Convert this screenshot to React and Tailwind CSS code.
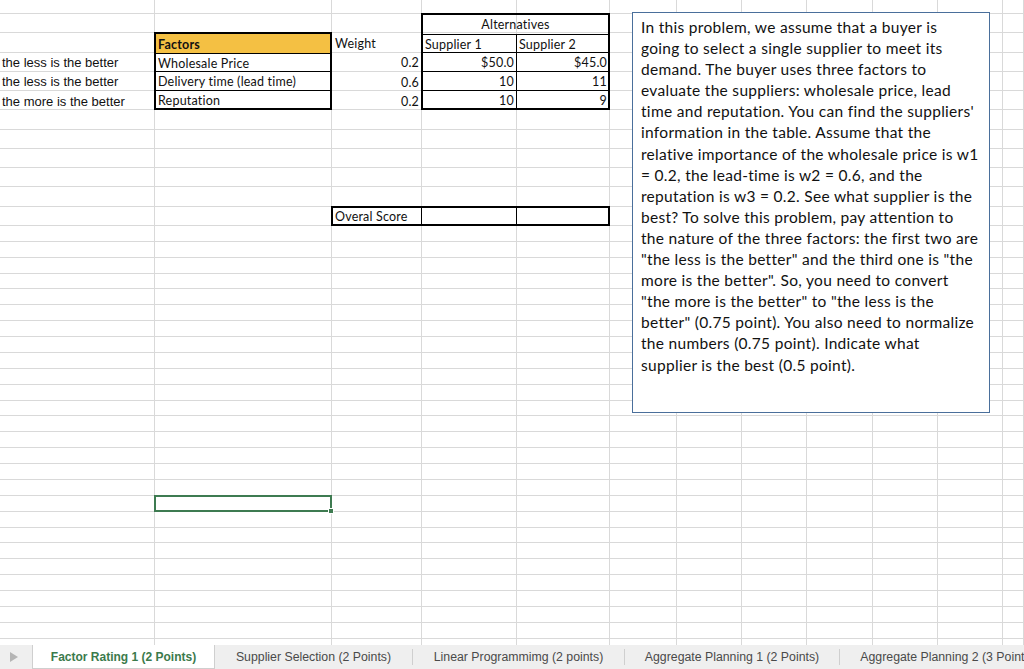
import React from 'react'

const ROWS = 40
const COLS = 12

const lines = [
    'In this problem, we assume that a buyer is',
    'going to select a single supplier to meet its',
    'demand. The buyer uses three factors to',
    'evaluate the suppliers: wholesale price, lead',
    "time and reputation. You can find the suppliers'",
    'information in the table. Assume that the',
    'relative importance of the wholesale price is w1',
    '= 0.2, the lead-time is w2 = 0.6, and the',
    'reputation is w3 = 0.2. See what supplier is the',
    'best? To solve this problem, pay attention to',
    'the nature of the three factors: the first two are',
    '"the less is the better" and the third one is "the',
    'more is the better". So, you need to convert',
    '"the more is the better" to "the less is the',
    'better" (0.75 point). You also need to normalize',
    'the numbers (0.75 point). Indicate what',
    'supplier is the best (0.5 point).',
]

const factors = ['Wholesale Price', 'Delivery time (lead time)', 'Reputation']
const suppliers = [
    ['$50.0', '$45.0'],
    ['10', '11'],
    ['10', '9'],
]

const tabs = [
    { name: 'Supplier Selection (2 Points)', w: 'w-[198px]' },
    { name: 'Linear Programmimg (2 points)', w: 'w-[212px]' },
    { name: 'Aggregate Planning 1 (2 Points)', w: 'w-[215px]' },
    { name: 'Aggregate Planning 2 (3 Points)', w: 'w-[215px]' },
]

const Sheet = () => {
    return (
        <div className="grid h-[645px] overflow-hidden">
            {/* gridlines */}
            <div className="col-start-1 row-start-1 grid grid-cols-[155px_177px_90px_95px_93px_67px_65px_65px_66px_65px_65px_1fr] grid-rows-[14px_repeat(11,19.27px)_repeat(28,15.885px)]">
                {Array.from({ length: ROWS * COLS }).map((_, i) => (
                    <div key={i} className="border-r border-b border-[#d9d9d9]" />
                ))}
            </div>

            {/* cell content */}
            <div className="col-start-1 row-start-1 grid grid-cols-[155px_177px_90px_95px_93px_67px_65px_65px_66px_65px_65px_1fr] grid-rows-[14px_repeat(11,19.27px)_repeat(28,15.885px)] text-[#111] font-['Lato','Open_Sans',sans-serif] text-[12.5px] tracking-[0.2px] leading-none">
                {['the less is the better', 'the less is the better', 'the more is the better'].map((t, i) => (
                    <div
                        key={i}
                        className={
                            i === 0 ? "col-start-1 row-start-4 flex items-center pl-[2px] pt-[1px] font-['Liberation_Sans',Arial,sans-serif] text-[13px] tracking-normal whitespace-nowrap"
                                : i === 1 ? "col-start-1 row-start-5 flex items-center pl-[2px] pt-[1px] font-['Liberation_Sans',Arial,sans-serif] text-[13px] tracking-normal whitespace-nowrap"
                                    : "col-start-1 row-start-6 flex items-center pl-[2px] pt-[1px] font-['Liberation_Sans',Arial,sans-serif] text-[13px] tracking-normal whitespace-nowrap"
                        }
                    >
                        {t}
                    </div>
                ))}

                {/* factors table */}
                <div className="col-start-2 row-start-3 row-span-4 -ml-px -mt-px grid grid-rows-4 border-2 border-black">
                    <div className="flex items-center bg-[#f4c043] pl-[2px] pt-[3px] font-bold">Factors</div>
                    {factors.map((f) => (
                        <div key={f} className="flex items-center border-t border-black pl-[2px] pt-[3px]">{f}</div>
                    ))}
                </div>

                {/* weights */}
                <div className="col-start-3 row-start-3 flex items-center pl-[3px] pt-[3px]">Weight</div>
                <div className="col-start-3 row-start-4 flex items-center justify-end pr-[3px] pt-[3px]">0.2</div>
                <div className="col-start-3 row-start-5 flex items-center justify-end pr-[3px] pt-[3px]">0.6</div>
                <div className="col-start-3 row-start-6 flex items-center justify-end pr-[3px] pt-[3px]">0.2</div>

                {/* alternatives table */}
                <div className="col-start-4 col-span-2 row-start-2 row-span-5 -ml-px -mt-px grid grid-rows-5 border-2 border-black">
                    <div className="flex items-center justify-center pt-[2px]">Alternatives</div>
                    <div className="grid grid-cols-[94px_1fr] border-t border-black">
                        <div className="flex items-center border-r border-black pl-[2px] pt-[3px]">Supplier 1</div>
                        <div className="flex items-center pl-[2px] pt-[3px]">Supplier 2</div>
                    </div>
                    {suppliers.map((row, i) => (
                        <div key={i} className="grid grid-cols-[94px_1fr] border-t border-black">
                            <div className="flex items-center justify-end border-r border-black pr-[2px] pt-[3px]">{row[0]}</div>
                            <div className="flex items-center justify-end pr-[1px] pt-[3px]">{row[1]}</div>
                        </div>
                    ))}
                </div>

                {/* overall score */}
                <div className="col-start-3 col-span-3 row-start-12 -ml-px -mt-px grid grid-cols-[89px_95px_1fr] border-2 border-black">
                    <div className="flex items-center border-r border-black pl-[2px] pt-[2px]">Overal Score</div>
                    <div className="border-r border-black" />
                    <div />
                </div>

                {/* active cell */}
                <div className="relative col-start-2 row-start-30 -ml-px -mt-px border-2 border-[#3e7b51]">
                    <div className="absolute -right-[4px] -bottom-[4px] h-[6px] w-[6px] border border-white bg-[#3e7b51]" />
                </div>
            </div>

            {/* floating text box */}
            <div className="col-start-1 row-start-1 relative">
                <div className="absolute left-[632px] top-[12px] h-[401px] w-[358px] border border-[#4a6f9b] bg-white pl-[8px] pt-[4px] font-['Lato','Open_Sans',sans-serif] text-[15.5px] tracking-[0.3px] leading-[21.1px] text-[#111]">
                    {lines.map((l, i) => (
                        <div key={i} className="whitespace-nowrap">{l}</div>
                    ))}
                </div>
            </div>
        </div>
    )
}

const TabBar = () => {
    return (
        <div className="flex h-[24px] items-stretch overflow-hidden bg-[#efefef] font-['Liberation_Sans',Arial,sans-serif] text-[12.3px] whitespace-nowrap">
            <div className="flex w-[32px] shrink-0 items-center pl-[10px]">
                <svg width="8" height="10" viewBox="0 0 8 10">
                    <polygon points="0,0 8,5 0,10" fill="#b5b5b5" />
                </svg>
            </div>
            <div className="flex w-[183px] shrink-0 items-center justify-center border-x border-b border-[#cfcfcf] bg-white text-[12px] font-bold text-[#3b7a4c]">
                Factor Rating 1 (2 Points)
            </div>
            {tabs.map((t, i) => (
                <div key={t.name} className={`flex shrink-0 items-center ${t.w}`}>
                    <div className="flex flex-1 justify-center text-[#4a4a4a]">{t.name}</div>
                    {i < tabs.length - 1 && <div className="h-[16px] w-px bg-[#cfcfcf]" />}
                </div>
            ))}
        </div>
    )
}

export default function App() {
    return (
        <div className="flex h-[669px] w-[1024px] flex-col overflow-hidden bg-white">
            <Sheet />
            <TabBar />
        </div>
    )
}
